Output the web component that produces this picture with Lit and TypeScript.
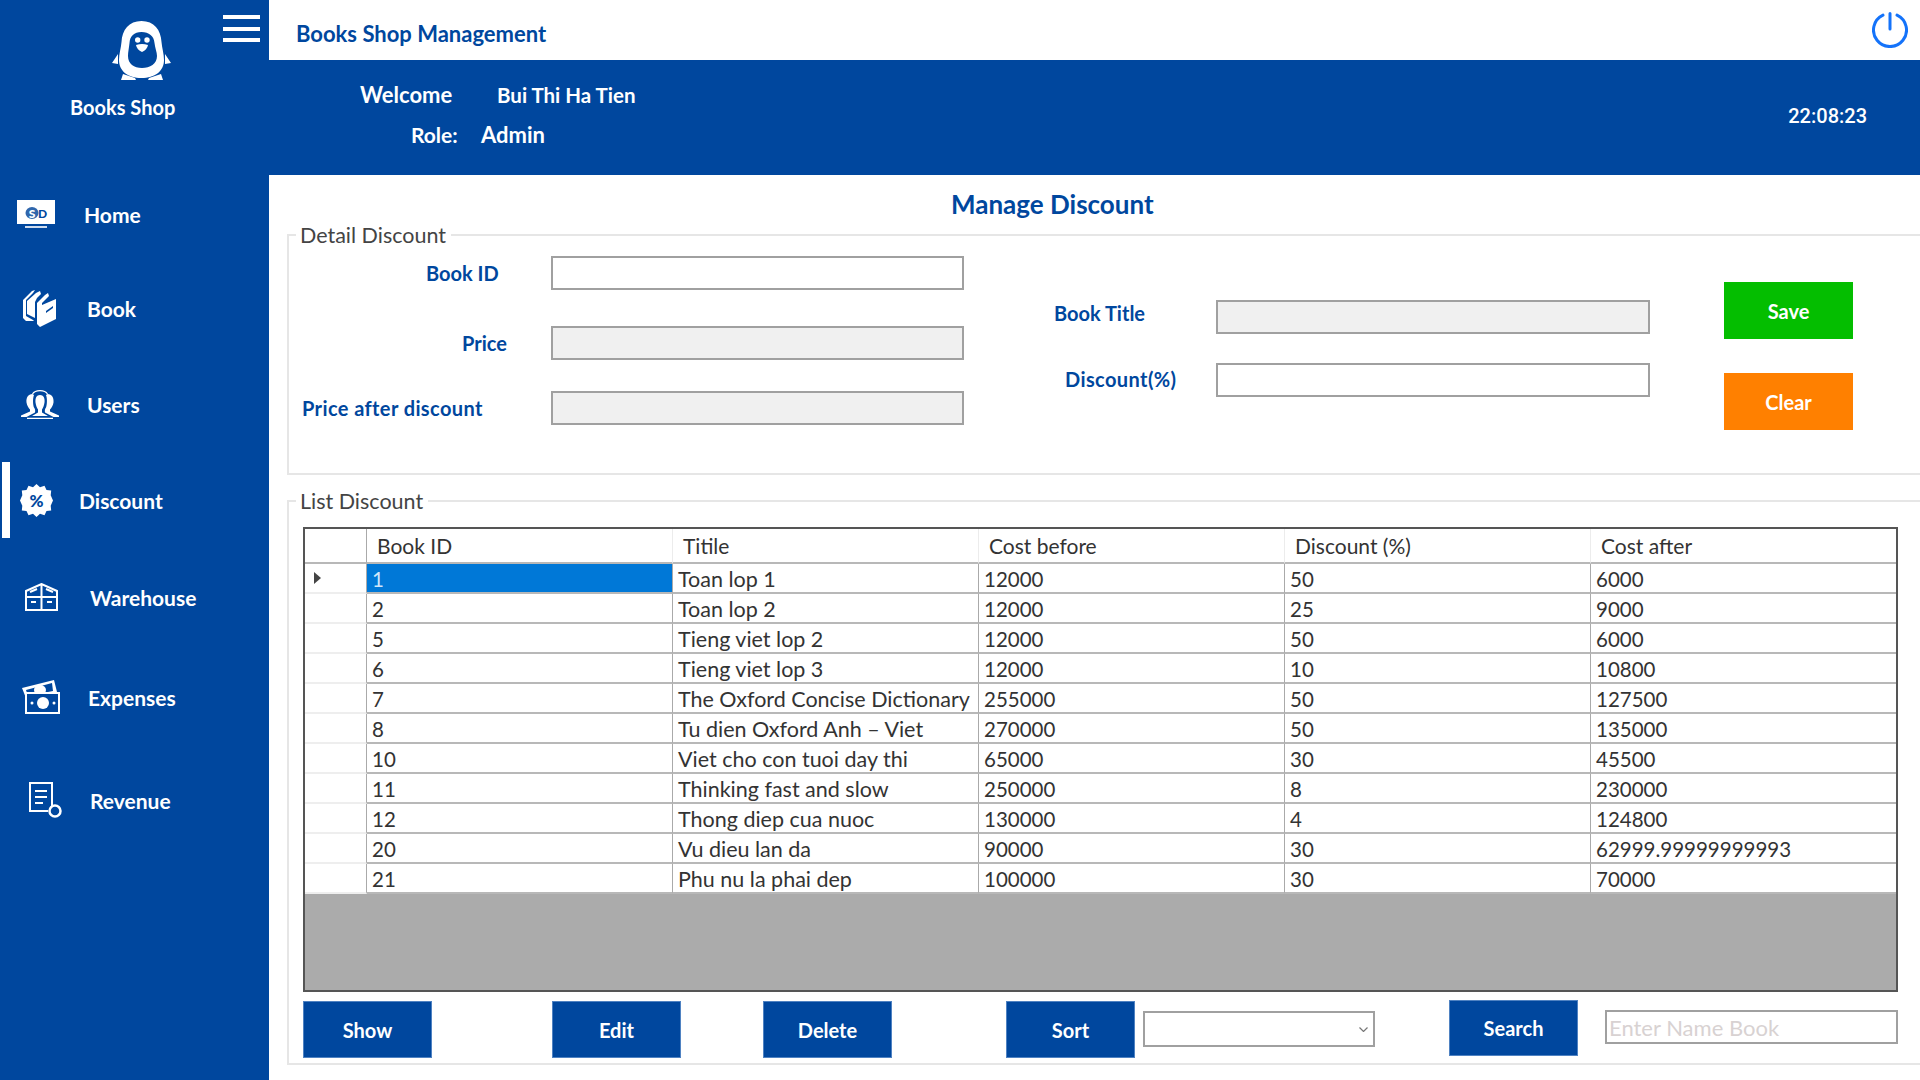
import { LitElement, html, css, svg } from "lit";
import { customElement } from "lit/decorators.js";

const penguin = svg`<svg width="60" height="60" viewBox="0 0 60 60" fill="#fff">
  <path d="M29.5 0C17 0 10 9 9.5 21 9 27 7 33 7 39 7 50 16 57 29.5 57S52 50 52 39C52 33 50 27 49.5 21 49 9 42 0 29.5 0Z"/>
  <path fill="#00479e" d="M29.5 11C22 11 18 15 17.5 22 17 27 16 31 16 35 16 43 22 47 30 47S45 43 45 35C45 31 43 27 42.5 22 42 15 37 11 29.5 11Z"/>
  <circle cx="25.7" cy="19" r="2.7"/><circle cx="35" cy="19" r="2.7"/>
  <path d="M24 24Q30 22 36 24 35 29 30 31 25 29 24 24Z"/>
  <path d="M0 42 6 33V43ZM59 42 53 33V43Z"/>
  <path d="M9 59 11 53 23 57 24 59ZM51 59 49 53 37 57 36 59Z"/>
</svg>`;

const homeIcon = svg`<svg width="38" height="28" viewBox="0 0 38 28">
  <rect width="38" height="24" fill="#fff"/>
  <rect x="8" y="26" width="22" height="2" fill="#cfdcee"/>
  <ellipse cx="15" cy="13" rx="6.500" ry="6" fill="#2f66ac"/>
  <text x="15" y="17.500" text-anchor="middle" font-size="12" font-weight="900" font-family="Lato" fill="#fff">S</text>
  <text x="21" y="17.500" font-size="12" font-weight="900" font-family="Lato" fill="#00479e">D</text>
</svg>`;

const bookIcon = svg`<svg width="34" height="37" viewBox="0 0 34 37" fill="#fff">
  <path d="M0 10 9 1 12 0 10 3 3 10V26L10 30 11 31 3 31 0 28Z"/>
  <path d="M4 11 13 3 17 1 18 4 14 8 12 12V28L4 24Z"/>
  <path d="M14 13 22 5 25 3 26 6 19 13 19 15 33 9V27L33 29 17 37 14 34Z"/>
  <path fill="#00479e" d="M23 21 30 16V18L23 23Z"/>
</svg>`;

const usersIcon = svg`<svg width="38" height="29" viewBox="0 0 38 29">
  <path fill="#fff" d="M11.500 4C7 4 5 8 5.500 12.500 6 15.500 7.500 18 9 19.500V21.500L0 25.500V27H5.500L14 22.500C14.500 20 14 19 13 17.500 12 15 11.500 9 13 5Z"/>
  <path fill="#fff" d="M26.500 4C31 4 33 8 32.500 12.500 32 15.500 30.500 18 29 19.500V21.500L38 25.500V27H32.500L24 22.500C23.500 20 24 19 25 17.500 26 15 26.500 9 25 5Z"/>
  <path fill="#fff" d="M19 5C22.500 5 24 8 23.500 12.500 23 16 22 18 21 19.500V22.500L27 26H11L17 22.500V19.500C16 18 15 16 14.500 12.500 14 8 15.500 5 19 5Z"/>
  <path fill="none" stroke="#fff" stroke-width="1.200" d="M6 28.400H32M11.500 4C13 1.500 16 .6 19 .6S25 1.500 26.500 4"/>
</svg>`;

const discountIcon = svg`<svg width="33" height="33" viewBox="0 0 33 33">
  <path fill="#fff" d="M16.500 0 20 3.300 24.500 1.700 26.500 6 31.200 6.500 30.700 11.200 33 16.500 30.700 21.800 31.200 26.500 26.500 27 24.500 31.300 20 29.700 16.500 33 13 29.700 8.500 31.300 6.500 27 1.800 26.500 2.300 21.800 0 16.500 2.300 11.200 1.800 6.500 6.500 6 8.500 1.700 13 3.300Z"/>
  <text x="16.500" y="22.500" text-anchor="middle" font-size="17" font-weight="900" font-family="Lato" fill="#00479e">%</text>
</svg>`;

const warehouseIcon = svg`<svg width="33" height="28" viewBox="0 0 33 28" fill="none" stroke="#fff" stroke-width="2">
  <path d="M1 27V8L16.500 1 32 8V27ZM1 14H32M16.500 1V27"/>
  <path d="M5 9 12 6M21 6 28 9M6 19H11M22 19H27"/>
</svg>`;

const expensesIcon = svg`<svg width="38" height="34" viewBox="0 0 38 34">
  <path fill="#fff" d="M0 8 32 0 35 12 4 18Z"/>
  <path fill="#00479e" d="M4 10 30 3 31 11 6 16Z"/>
  <ellipse cx="18" cy="10" rx="6" ry="5" fill="#fff"/>
  <rect x="4" y="13" width="33" height="20" fill="#00479e" stroke="#fff" stroke-width="2"/>
  <circle cx="21" cy="23" r="6" fill="#fff"/>
  <circle cx="10" cy="23" r="1.500" fill="#fff"/><circle cx="32" cy="23" r="1.500" fill="#fff"/>
</svg>`;

const revenueIcon = svg`<svg width="33" height="36" viewBox="0 0 33 36" fill="none" stroke="#fff" stroke-width="2">
  <path d="M23 24V1H1V29H19"/>
  <path d="M6 9H18M6 15H18M6 21H14"/>
  <circle cx="26" cy="29" r="5.500" stroke-width="2.500"/>
</svg>`;

const navItems = [
  { label: "Home", icon: homeIcon, left: 17, gap: 29, top: 0 },
  { label: "Book", icon: bookIcon, left: 23, gap: 30, top: 18 },
  { label: "Users", icon: usersIcon, left: 21, gap: 28, top: 20 },
  { label: "Discount", icon: discountIcon, left: 20, gap: 26, top: 20, active: true },
  { label: "Warehouse", icon: warehouseIcon, left: 25, gap: 32, top: 21 },
  { label: "Expenses", icon: expensesIcon, left: 22, gap: 28, top: 24 },
  { label: "Revenue", icon: revenueIcon, left: 29, gap: 28, top: 27 },
];

const rows = [
  ["1", "Toan lop 1", "12000", "50", "6000"],
  ["2", "Toan lop 2", "12000", "25", "9000"],
  ["5", "Tieng viet lop 2", "12000", "50", "6000"],
  ["6", "Tieng viet lop 3", "12000", "10", "10800"],
  ["7", "The Oxford Concise Dictionary", "255000", "50", "127500"],
  ["8", "Tu dien Oxford Anh – Viet", "270000", "50", "135000"],
  ["10", "Viet cho con tuoi day thi", "65000", "30", "45500"],
  ["11", "Thinking fast and slow", "250000", "8", "230000"],
  ["12", "Thong diep cua nuoc", "130000", "4", "124800"],
  ["20", "Vu dieu lan da", "90000", "30", "62999.99999999993"],
  ["21", "Phu nu la phai dep", "100000", "30", "70000"],
];

@customElement("app-root")
export class AppRoot extends LitElement {
  static styles = css`
    :host {
      display: flex;
      width: 1920px;
      height: 1080px;
      overflow: hidden;
      background: #fff;
      font-family: "Lato", "Open Sans", sans-serif;
      --blue: #00479e;
    }

    .sidebar {
      width: 269px;
      flex: none;
      background: var(--blue);
      color: #fff;
      position: relative;
    }

    .brand {
      height: 176px;
      box-sizing: border-box;
      padding-top: 21px;
      padding-left: 70px;
    }
    .brand svg {
      display: block;
      margin-left: 42px;
    }
    .brand span {
      display: block;
      margin-top: 13px;
      font-size: 20px;
      font-weight: 700;
      line-height: 26px;
    }

    .burger {
      position: absolute;
      left: 223px;
      top: 15px;
      width: 37px;
      height: 27px;
      display: flex;
      flex-direction: column;
      justify-content: space-between;
    }
    .burger i {
      display: block;
      height: 4px;
      background: #fff;
    }

    .nav-item {
      height: 76px;
      display: flex;
      align-items: center;
      font-size: 21px;
      font-weight: 700;
      position: relative;
    }
    .nav-item.active::before {
      content: "";
      position: absolute;
      left: 2px;
      top: 0;
      bottom: 0;
      width: 8px;
      background: #fff;
    }

    .main {
      flex: 1;
      min-width: 0;
      display: flex;
      flex-direction: column;
    }

    .topbar {
      height: 60px;
      flex: none;
      display: flex;
      align-items: center;
      justify-content: space-between;
      padding: 0 12px 0 27px;
      color: var(--blue);
      font-size: 22px;
      font-weight: 700;
    }
    .topbar span {
      margin-top: 6px;
    }

    .band {
      height: 115px;
      flex: none;
      background: var(--blue);
      color: #fff;
      display: flex;
      justify-content: space-between;
      font-size: 22px;
      font-weight: 700;
    }
    .who {
      display: grid;
      grid-template-columns: 137px auto;
      grid-template-rows: 39px 40px;
      align-items: center;
      margin: 15px 0 0 91px;
    }
    .who .name {
      font-size: 20.5px;
    }
    .who .role {
      padding-left: 51px;
      font-size: 21px;
    }
    .who .admin {
      margin-left: -16px;
    }
    .clock {
      font-family: "Roboto", sans-serif;
      font-weight: 500;
      font-size: 20px;
      line-height: 112px;
      margin-right: 53px;
    }

    .content {
      flex: 1;
      overflow: hidden;
      padding-left: 18px;
    }

    h1 {
      margin: 15px 0 5px;
      padding-left: 664px;
      font-size: 26px;
      line-height: 28px;
      font-weight: 700;
      color: var(--blue);
    }

    fieldset {
      margin: 0 -20px 0 0;
      padding: 0;
      border: 2px solid #e6e6e6;
      min-width: 0;
    }
    legend {
      margin-left: 7px;
      padding: 0 5px 0 4px;
      font-size: 21.5px;
      line-height: 24px;
      color: #444;
    }

    .detail {
      height: 252px;
      box-sizing: border-box;
      display: flex;
    }
    .col-left {
      width: 675px;
      flex: none;
      padding-top: 9px;
    }
    .col-right {
      flex: none;
      padding-top: 53px;
      margin-left: 90px;
    }
    .field {
      display: flex;
      align-items: center;
      height: 34px;
      margin-bottom: 31px;
    }
    .col-left .field:first-child {
      margin-bottom: 36px;
    }
    .col-right .field {
      margin-bottom: 29px;
    }
    .field label {
      flex: none;
      font-size: 20px;
      font-weight: 700;
      color: var(--blue);
      box-sizing: border-box;
      padding-bottom: 1px;
    }
    .col-left label {
      width: 262px;
    }
    .col-right label {
      width: 162px;
      padding-bottom: 3px;
    }
    .col-right label.raised {
      padding-bottom: 8px;
    }
    .loose {
      letter-spacing: 0.4px;
    }

    input {
      box-sizing: border-box;
      height: 34px;
      border: 2px solid #a0a0a0;
      background: #fff;
      padding: 0 2px;
      font: inherit;
      font-size: 22px;
      outline: none;
    }
    input[readonly] {
      background: #f0f0f0;
    }
    input::placeholder {
      color: #d8d2d2;
    }
    .wide {
      width: 413px;
    }
    .wider {
      width: 434px;
    }

    .actions {
      display: flex;
      flex-direction: column;
      gap: 34px;
      margin: 35px 0 0 74px;
    }

    button {
      display: block;
      flex: none;
      width: 129px;
      height: 57px;
      box-sizing: border-box;
      border: 1px solid #4f82c2;
      background: var(--blue);
      color: #fff;
      font: inherit;
      font-size: 20px;
      font-weight: 700;
      padding: 0;
    }
    button.save {
      background: #04be00;
      border: none;
    }
    button.clear {
      background: #ff8000;
      border: none;
    }

    .list {
      margin-top: 14px;
      height: 576px;
      box-sizing: border-box;
    }
    .list-body {
      padding: 14px 0 0 14px;
    }

    .grid {
      width: 1595px;
      height: 465px;
      box-sizing: border-box;
      border: 2px solid #555;
      background: #ababab;
    }
    table {
      width: 1591px;
      table-layout: fixed;
      border-spacing: 0;
      background: #fff;
      font-size: 20.5px;
      color: #333;
    }
    th,
    td {
      box-sizing: border-box;
      padding: 2px 0 0 5px;
      font-weight: 400;
      text-align: left;
      white-space: nowrap;
      overflow: hidden;
      height: 30px;
      line-height: 26px;
      border-bottom: 2px solid #b8b8b8;
      border-right: 1px solid #aaa;
    }
    th {
      height: 35px;
      padding: 0 0 0 10px;
      font-size: 21px;
      border-right-color: #ececec;
    }
    td.text {
      font-size: 21.5px;
    }
    .lead {
      border-right-color: #aaa;
      border-bottom-color: #eee;
      padding: 0;
    }
    th.lead {
      border-bottom-color: #b8b8b8;
    }
    .lead svg {
      display: block;
      margin-left: 9px;
    }
    td:last-child,
    th:last-child {
      border-right: none;
    }
    td.picked {
      background: #0078d7;
      color: #cfe6fa;
    }

    .bar {
      display: flex;
      align-items: flex-start;
      padding-top: 9px;
    }
    .bar .edit { margin-left: 120px; }
    .bar .delete { margin-left: 82px; }
    .bar .sort { margin-left: 114px; }
    .pick {
      position: relative;
      flex: none;
      margin: 10px 0 0 8px;
    }
    .pick select {
      display: block;
      width: 232px;
      height: 36px;
      box-sizing: border-box;
      border: 2px solid #a0a0a0;
      border-radius: 0;
      background: #fff;
      appearance: none;
    }
    .pick svg {
      position: absolute;
      right: 7px;
      top: 16px;
    }
    .bar .search { margin: -1px 0 0 74px; height: 56px; }
    .bar input {
      width: 293px;
      margin: 9px 0 0 27px;
    }
  `;

  render() {
    return html`
      <aside class="sidebar">
        <div class="brand">${penguin}<span>Books Shop</span></div>
        <div class="burger"><i></i><i></i><i></i></div>
        <nav>
          ${navItems.map(
            (n) => html`<div
              class="nav-item ${n.active ? "active" : ""}"
              style="margin-top:${n.top}px;padding-left:${n.left}px;gap:${n.gap}px"
            >
              ${n.icon}<span>${n.label}</span>
            </div>`
          )}
        </nav>
      </aside>
      <div class="main">
        <header class="topbar">
          <span>Books Shop Management</span>
          <svg width="36" height="36" viewBox="0 0 36 36" fill="none" stroke="#1473fa" stroke-width="3" stroke-linecap="round">
            <path d="M11 3.100A16.500 16.500 0 1 0 25 3.100M18 1.500V17"/>
          </svg>
        </header>
        <div class="band">
          <div class="who">
            <span>Welcome</span><span class="name">Bui Thi Ha Tien</span>
            <span class="role">Role:</span><span class="admin">Admin</span>
          </div>
          <div class="clock">22:08:23</div>
        </div>
        <div class="content">
          <h1>Manage Discount</h1>
          <fieldset class="detail">
            <legend>Detail Discount</legend>
            <div class="col-left">
              <div class="field"><label style="padding-left:137px">Book ID</label><input class="wide" /></div>
              <div class="field"><label style="padding-left:173px">Price</label><input class="wide" readonly /></div>
              <div class="field"><label class="loose" style="padding-left:13px">Price after discount</label><input class="wide" readonly /></div>
            </div>
            <div class="col-right">
              <div class="field"><label class="raised">Book Title</label><input class="wider" readonly /></div>
              <div class="field"><label class="loose" style="padding-left:11px">Discount(%)</label><input class="wider" /></div>
            </div>
            <div class="actions">
              <button class="save">Save</button>
              <button class="clear">Clear</button>
            </div>
          </fieldset>
          <fieldset class="list">
            <legend>List Discount</legend>
            <div class="list-body">
              <div class="grid">
                <table>
                  <colgroup>
                    <col style="width:62px" /><col style="width:306px" /><col style="width:306px" /><col style="width:306px" /><col style="width:306px" /><col />
                  </colgroup>
                  <thead>
                    <tr>
                      <th class="lead"></th><th>Book ID</th><th>Titile</th><th>Cost before</th><th>Discount (%)</th><th>Cost after</th>
                    </tr>
                  </thead>
                  <tbody>
                    ${rows.map(
                      (r, i) => html`<tr>
                        <td class="lead">
                          ${i === 0
                            ? svg`<svg width="8" height="12" viewBox="0 0 8 12"><path d="M0 0 7 6 0 12Z" fill="#444"/></svg>`
                            : ""}
                        </td>
                        ${r.map(
                          (c, j) => html`<td class="${i === 0 && j === 0 ? "picked" : ""} ${j === 1 ? "text" : ""}">${c}</td>`
                        )}
                      </tr>`
                    )}
                  </tbody>
                </table>
              </div>
              <div class="bar">
                <button>Show</button>
                <button class="edit">Edit</button>
                <button class="delete">Delete</button>
                <button class="sort">Sort</button>
                <div class="pick">
                  <select></select>
                  <svg width="9" height="5" viewBox="0 0 9 5" fill="none" stroke="#777" stroke-width="1.200"><path d="M.5 .5 4.500 4.500 8.500 .5"/></svg>
                </div>
                <button class="search">Search</button>
                <input placeholder="Enter Name Book" />
              </div>
            </div>
          </fieldset>
        </div>
      </div>
    `;
  }
}
